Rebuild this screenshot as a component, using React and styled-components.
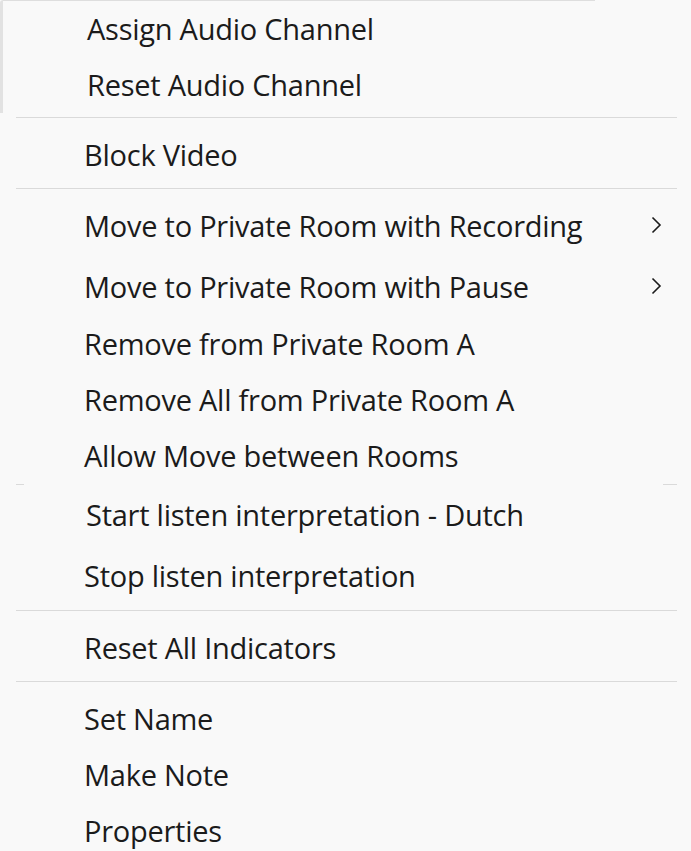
import React from 'react';
import styled, { createGlobalStyle } from 'styled-components';

const GlobalStyle = createGlobalStyle`
  html, body {
    margin: 0;
    padding: 0;
    background: #f9f9f9;
  }
  body {
    font-family: "Open Sans", "Noto Sans", sans-serif;
    color: #1b1b1b;
  }
`;

const Menu = styled.div`
  width: 691px;
  height: 851px;
  overflow: hidden;
  background: #f9f9f9;
  display: flex;
  flex-direction: column;
`;

const TopPanel = styled.div`
  width: 592px;
  height: 110px;
  border-left: 3px solid #e2e2e2;
  border-top: 1px solid #dedede;
  border-top-left-radius: 3px;
  padding-top: 2px;
  display: flex;
  flex-direction: column;
`;

const Item = styled.div`
  height: ${p => p.$h || 56}px;
  box-sizing: border-box;
  flex: none;
  display: flex;
  align-items: center;
  padding-left: ${p => p.$indent || 84}px;
  padding-right: 28px;
  padding-bottom: ${p => p.$pb ?? 5}px;
  font-size: 29px;
  letter-spacing: -0.25px;
  white-space: nowrap;
  cursor: default;
`;

const Label = styled.span`
  flex: 1;
`;

const Separator = styled.div`
  flex: none;
  height: 1px;
  margin: ${p => p.$top || 0}px 14px ${p => p.$bottom || 0}px 16px;
  background: ${p =>
    p.$stub
      ? 'linear-gradient(to right, #dadada 0, #dadada 8px, transparent 8px, transparent calc(100% - 14px), #dadada calc(100% - 14px))'
      : '#dadada'};
`;

const Arrow = styled.svg`
  flex: none;
  margin-top: -2px;
`;

const Chevron = () => (
  <Arrow width="14" height="20" viewBox="0 0 14 20" fill="none">
    <polyline points="3.5,2.5 11,10 3.5,17.5" stroke="#1b1b1b" strokeWidth="1.6" />
  </Arrow>
);

export default function App() {
  return (
    <Menu>
      <GlobalStyle />
      <TopPanel>
        <Item $indent={84}>Assign Audio Channel</Item>
        <Item $indent={84}>Reset Audio Channel</Item>
      </TopPanel>
      <Separator $top={4} $bottom={11} />
      <Item>Block Video</Item>
      <Separator $top={3} $bottom={7} />
      <Item $h={64}>
        <Label>Move to Private Room with Recording</Label>
        <Chevron />
      </Item>
      <Item $h={58}>
        <Label>Move to Private Room with Pause</Label>
        <Chevron />
      </Item>
      <Item>Remove from Private Room A</Item>
      <Item>Remove All from Private Room A</Item>
      <Item $h={54} $pb={3}>Allow Move between Rooms</Item>
      <Separator $stub $bottom={2} />
      <Item $h={60} $indent={86}>Start listen interpretation - Dutch</Item>
      <Item $h={62}>Stop listen interpretation</Item>
      <Separator $top={1} $bottom={11} />
      <Item>Reset All Indicators</Item>
      <Separator $top={3} $bottom={11} />
      <Item>Set Name</Item>
      <Item>Make Note</Item>
      <Item>Properties</Item>
    </Menu>
  );
}
